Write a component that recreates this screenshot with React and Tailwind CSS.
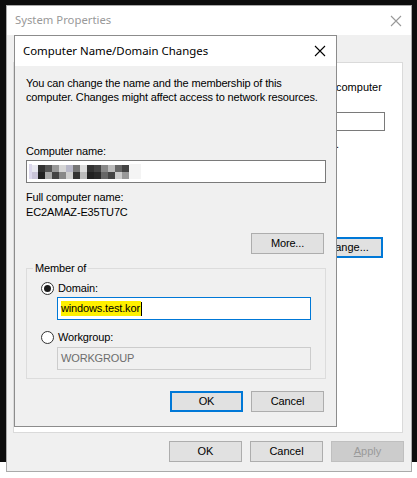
import React from "react";

const ui = { fontFamily: '"Liberation Sans", Arial, sans-serif' };
const title = { fontFamily: '"Noto Sans", "Open Sans", sans-serif' };

function CloseX({ className }) {
  return (
    <svg width="12" height="12" viewBox="0 0 12 12" className={className}>
      <path d="M1 1 L11 11 M11 1 L1 11" stroke="currentColor" strokeWidth="1.1" fill="none" />
    </svg>
  );
}

function Button({ children, focused, disabled, className = "" }) {
  const base = "flex items-center justify-center w-[73px] h-[21px] text-[11px] ";
  let look = "bg-[#e1e1e1] border border-[#adadad] text-black";
  if (focused) look = "bg-[#e1e1e1] border-2 border-[#0078d7] text-black";
  if (disabled) look = "bg-[#cccccc] border border-[#bfbfbf] text-[#9a9a9a]";
  return <div className={base + look + " " + className}>{children}</div>;
}

function Radio({ checked }) {
  return (
    <div className="w-[13px] h-[13px] rounded-full border border-[#333] bg-white flex items-center justify-center">
      {checked && <div className="w-[7px] h-[7px] rounded-full bg-[#1a1a1a]" />}
    </div>
  );
}

// blurred computer name
function Pixelated() {
  const cells = [
    [0, 0, "#e8e8f0"], [0, 1, "#c9c4d8"], [1, 0, "#333"], [1, 1, "#222"], [2, 0, "#555"], [2, 1, "#aaa"],
    [3, 0, "#999"], [3, 1, "#444"], [4, 0, "#d6d6d6"], [4, 1, "#888"], [5, 0, "#b8b8c8"], [5, 1, "#cfcfcf"],
    [6, 0, "#777"], [6, 1, "#333"], [7, 0, "#ddd"], [7, 1, "#bbb"], [8, 0, "#333"], [8, 1, "#222"],
    [9, 0, "#444"], [9, 1, "#2a2a2a"], [10, 0, "#888"], [10, 1, "#666"], [11, 0, "#bbb"], [11, 1, "#444"],
    [12, 0, "#666"], [12, 1, "#ccc"], [13, 0, "#444"], [13, 1, "#999"],
  ];
  return (
    <svg width="112" height="16" viewBox="0 0 112 16">
      {cells.map(([x, y, c], i) => (
        <rect key={i} x={x * 7 + 2} y={y * 7 + 1} width="7" height="7" fill={c} />
      ))}
      <rect x="0" y="0" width="3" height="15" fill="#dcd8ec" />
      <rect x="100" y="0" width="12" height="15" fill="#f4f4f4" />
    </svg>
  );
}

export default function App() {
  return (
    <div className="relative w-[417px] h-[478px] bg-white overflow-hidden" style={ui}>
      <div className="h-[462px] bg-[#0d0d0d]" />

      {/* System Properties window (behind) */}
      <div className="absolute left-[6px] top-[5px] w-[406px] h-[467px] bg-[#f0f0f0] border border-[#aaaaaa] flex flex-col">
        <div className="h-[29px] bg-white flex items-center justify-between pl-[8px] pr-[9px]">
          <span className="text-[11.3px] text-[#999999]" style={title}>System Properties</span>
          <CloseX className="text-[#999999]" />
        </div>
        <div className="ml-[6px] mt-[27px] w-[390px] h-[371px] bg-white border border-[#dadada] pl-[322px] pt-[17px] flex flex-col">
          <span className="text-[11px] leading-[14px] text-black whitespace-nowrap">computer</span>
          <div className="mt-[18px] w-[49px] h-[19px] border border-[#7a7a7a] bg-white" />
          <span className="text-[11px] leading-[14px] mt-[6px]">.</span>
          <div className="-ml-[29px] mt-[86px] w-[76px] h-[21px] border-2 border-[#0078d7] bg-[#e1e1e1] flex items-center justify-center text-[11px]">
            Change...
          </div>
        </div>
        <div className="flex justify-end gap-[8px] pr-[7px] mt-[8px]">
          <Button>OK</Button>
          <Button>Cancel</Button>
          <Button disabled><span className="underline">A</span>pply</Button>
        </div>
      </div>

      {/* Computer Name/Domain Changes dialog */}
      <div className="absolute left-[14px] top-[35px] w-[323px] h-[392px] bg-[#f0f0f0] border border-[#8c8c8c] flex flex-col">
        <div className="h-[30px] bg-white flex items-center justify-between pl-[8px] pr-[10px]">
          <span className="text-[11.4px] text-black" style={title}>Computer Name/Domain Changes</span>
          <CloseX className="text-black" />
        </div>
        <div className="px-[11px] pt-[10px] flex flex-col text-[11px] tracking-[-0.15px] text-black">
          <p className="leading-[14px] whitespace-nowrap">
            You can change the name and the membership of this
            <br />
            computer. Changes might affect access to network resources.
          </p>
          <span className="mt-[40px] leading-[14px]">Computer name:</span>
          <div className="mt-[2px] w-[300px] h-[23px] bg-white border border-[#7a7a7a] flex items-center pl-[2px]">
            <Pixelated />
          </div>
          <span className="mt-[7px] leading-[15px]">Full computer name:</span>
          <span className="leading-[15px]">EC2AMAZ-E35TU7C</span>
          <div className="mt-[13px] flex justify-end pr-[1px]">
            <Button>More...</Button>
          </div>
          <fieldset className="mt-[7px] w-[300px] h-[118px] border border-[#dcdcdc]">
            <legend className="ml-[6px] px-[2px] leading-[14px]">Member of</legend>
            <div className="px-[14px]">
              <div className="mt-[6px] flex items-center gap-[4px]">
                <Radio checked />
                <span className="leading-[14px]">Domain:</span>
              </div>
              <div className="mt-[2px] ml-[16px] w-[254px] h-[23px] bg-white border border-[#0078d7] flex items-center pl-[3px]">
                <span className="bg-[#fff000] leading-[15px] pr-[1px]">windows.test.kor</span>
                <span className="w-[1px] h-[14px] bg-black" />
              </div>
              <div className="mt-[10px] flex items-center gap-[4px]">
                <Radio />
                <span className="leading-[14px]">Workgroup:</span>
              </div>
              <div className="mt-[3px] ml-[16px] w-[254px] h-[23px] bg-[#f0f0f0] border border-[#cccccc] flex items-center pl-[3px] text-[#6d6d6d]">
                WORKGROUP
              </div>
            </div>
          </fieldset>
          <div className="mt-[12px] flex justify-end gap-[8px] pr-[1px]">
            <Button focused>OK</Button>
            <Button>Cancel</Button>
          </div>
        </div>
      </div>
    </div>
  );
}
